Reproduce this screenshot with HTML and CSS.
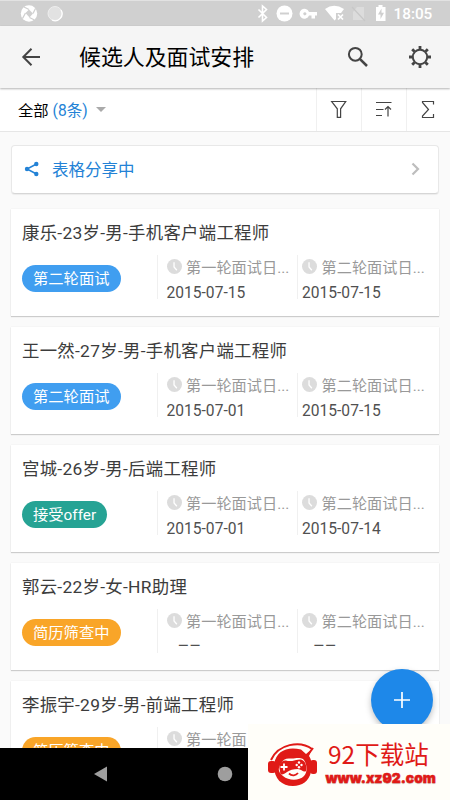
FILE: index.html
```
<!DOCTYPE html>
<html lang="zh-CN">
<head>
<meta charset="utf-8">
<title>候选人及面试安排</title>
<link rel="stylesheet" href="styles.css">
</head>
<body>
<svg width="0" height="0" class="defs">
  <symbol id="clock" viewBox="0 0 16 16"><circle cx="8" cy="8" r="8" fill="#dcdcdc"/><path d="M7.500 3.500V8.500L10.500 12" fill="none" stroke="#fff" stroke-width="1.400"/></symbol>
</svg>
<div class="phone">
  <header class="status">
    <svg width="450" height="26" viewBox="0 0 450 26">
      <circle cx="29" cy="13.500" r="8.200" fill="#fff"/>
      <path d="M25.500 13L29 9.500L33 13.500L29.500 17.500Z" fill="#d0d0d0"/>
      <g fill="none" stroke="#d0d0d0" stroke-width="1.300"><path d="M29 9.500L24 7M33 13.500L35.500 8.500M29.500 17.500L34.500 20M25.500 13L22.500 18.500"/></g>
      <circle cx="55" cy="13.500" r="7" fill="#e2e2e2" stroke="#eee"/>
      <path d="M61 10a7 7 0 0 1-9 10" stroke="#fff" stroke-width="1.300" fill="none"/>
      <path d="M258.500 9.500l8 8-4 3.500V6l4 3.500-8 8" stroke="#fff" fill="none" stroke-width="1.600"/>
      <circle cx="284.500" cy="13.500" r="8" fill="#fff"/><path d="M280 13.500h9" stroke="#d0d0d0" stroke-width="2"/>
      <path d="M309 12H317V15.500H315V18.500H311.500V15.500H309A4.900 4.900 0 1 1 309 12ZM304.800 12.200a1.600 1.600 0 1 0 .1 0Z" fill="#fff" fill-rule="evenodd"/>
      <path d="M325 9Q334 2.500 344 9L341 13H336V19L334.500 20.500Z" fill="#fff"/><path d="M338 14.500l5 5M343 14.500l-5 5" stroke="#fff" stroke-width="1.700"/>
      <path d="M357 7h7v13h-11v-8Z" fill="#dcdcdc"/><path d="M352 7l13 14" stroke="#c7c7c7" stroke-width="1.200"/>
      <path d="M376 7h2.500V5h4v2h3v14h-9.500Z" fill="#fff"/><path d="M381.500 8.500l-3.500 6h2.500v4.500l3.500-6.200h-2.500Z" fill="#cfcfcf"/>
    </svg>
    <span class="time">18:05</span>
  </header>
  <div class="appbar">
    <svg class="back" width="20" height="20" viewBox="0 0 20 20"><path d="M19 10H2.500M10.500 1.800L2.300 10l8.200 8.200" fill="none" stroke="#444" stroke-width="2"/></svg>
    <h1>候选人及面试安排</h1>
    <svg class="search" width="22" height="22" viewBox="0 0 22 22"><circle cx="8.300" cy="8.300" r="6.400" fill="none" stroke="#444" stroke-width="2"/><path d="M12.800 12.800l7.200 7.200" stroke="#444" stroke-width="2.500"/></svg>
    <svg class="gear" width="24" height="24" viewBox="-12 -12 24 24"><circle r="7.200" fill="none" stroke="#444" stroke-width="2"/><path d="M0-11V-8M0 11V8M-11 0H-8M11 0H8M-7.800-7.800L-5.500-5.500M7.800 7.800L5.500 5.500M-7.800 7.800L-5.500 5.500M7.800-7.800L5.500-5.500" stroke="#444" stroke-width="2.800"/></svg>
  </div>
  <nav class="filter">
    <div class="scope"><span>全部</span><span class="count">(8条)</span><i class="caret"></i></div>
    <div class="tool"><svg width="18" height="19" viewBox="0 0 18 19"><path d="M1.700 1.500H15.700L10.600 8.800V17.300H7.300V8.800Z"/></svg></div>
    <div class="tool"><svg width="18" height="19" viewBox="0 0 18 19"><path d="M1 2.500H16.500M1 9.500H8.500M1 15.500H7M13 16.500V6.500M10 9.500L13 6.500L16 9.500"/></svg></div>
    <div class="tool last"><svg width="16" height="19" viewBox="0 0 16 19"><path d="M13.500 4.500V1.500H2.500V2.500L8.500 9.500L2.500 16V17.500H13.500V14"/></svg></div>
  </nav>
  <main class="list">
    <div class="share">
      <svg width="16" height="16" viewBox="0 0 16 16"><path d="M12.500 3L3 8l9.500 5" fill="none" stroke="#2382d6" stroke-width="1.500"/><g fill="#2382d6"><circle cx="12.300" cy="3" r="2.200"/><circle cx="3" cy="8" r="2.200"/><circle cx="12.300" cy="13" r="2.200"/></g></svg>
      <span>表格分享中</span>
      <svg class="chev" width="9" height="14" viewBox="0 0 9 14"><path d="M1.500 1.500L7 7l-5.500 5.500" fill="none" stroke="#bdbdbd" stroke-width="2.200"/></svg>
    </div>
    <article class="card">
      <h2>康乐-23岁-男-手机客户端工程师</h2>
      <div class="row">
        <div class="state"><span class="tag blue">第二轮面试</span></div>
        <div class="field first"><div class="label"><svg><use href="#clock"/></svg>第一轮面试日...</div><div class="value">2015-07-15</div></div>
        <div class="field"><div class="label"><svg><use href="#clock"/></svg>第二轮面试日...</div><div class="value">2015-07-15</div></div>
      </div>
    </article>
    <article class="card">
      <h2>王一然-27岁-男-手机客户端工程师</h2>
      <div class="row">
        <div class="state"><span class="tag blue">第二轮面试</span></div>
        <div class="field first"><div class="label"><svg><use href="#clock"/></svg>第一轮面试日...</div><div class="value">2015-07-01</div></div>
        <div class="field"><div class="label"><svg><use href="#clock"/></svg>第二轮面试日...</div><div class="value">2015-07-15</div></div>
      </div>
    </article>
    <article class="card">
      <h2>宫城-26岁-男-后端工程师</h2>
      <div class="row">
        <div class="state"><span class="tag green">接受offer</span></div>
        <div class="field first"><div class="label"><svg><use href="#clock"/></svg>第一轮面试日...</div><div class="value">2015-07-01</div></div>
        <div class="field"><div class="label"><svg><use href="#clock"/></svg>第二轮面试日...</div><div class="value">2015-07-14</div></div>
      </div>
    </article>
    <article class="card">
      <h2>郭云-22岁-女-HR助理</h2>
      <div class="row">
        <div class="state"><span class="tag orange">简历筛查中</span></div>
        <div class="field first"><div class="label"><svg><use href="#clock"/></svg>第一轮面试日...</div><div class="value none">––</div></div>
        <div class="field"><div class="label"><svg><use href="#clock"/></svg>第二轮面试日...</div><div class="value none">––</div></div>
      </div>
    </article>
    <article class="card">
      <h2>李振宇-29岁-男-前端工程师</h2>
      <div class="row">
        <div class="state"><span class="tag orange">简历筛查中</span></div>
        <div class="field first"><div class="label"><svg><use href="#clock"/></svg>第一轮面</div></div>
        <div class="field"></div>
      </div>
    </article>
  </main>
  <footer class="sysnav">
    <svg width="250" height="52" viewBox="0 0 250 52" fill="#9e9e9e"><path d="M94 26L107 18.500V33.500Z"/><circle cx="225" cy="26" r="7.300"/></svg>
  </footer>
  <button class="fab"><svg width="16" height="16" viewBox="0 0 16 16"><path d="M8 0V16M0 8H16" stroke="#fff" stroke-width="1.700"/></svg></button>
  <aside class="brand">
    <svg width="50" height="44" viewBox="0 0 50 44">
      <path d="M3 17C10 1 32-3 44 6" fill="none" stroke="#e01a17" stroke-width="2"/>
      <rect x="0" y="18" width="8" height="12" rx="3" fill="#e01a17"/><rect x="42" y="17" width="7" height="14" rx="3" fill="#e01a17"/>
      <path d="M6 23C7 8 19 3 33 6.500L38 11L44 6L41 13C44 17 44 23 43 29C41 38 34 43 25 43C14 43 6 36 6 23Z" fill="#e01a17"/>
      <path d="M39 13L45 5" stroke="#e01a17" stroke-width="2"/>
      <path d="M12 22C14 17 18 15 22 15.500C27 16 30 14 35 16C39 20 40 29 36 33C31 38 21 38 15 33C10 29 10 26 12 22Z" fill="#fffef9"/>
      <path d="M12 28C10 22 13 17 18 17.500C23 19.500 29 16 33 16.500C38 18 39 24 38 28C36 30 33 26 30 26C25 26 22 27 19 29C15 32 12 33 12 28Z" fill="#e01a17"/>
      <path d="M12.500 24h7M16 20.500v7" stroke="#fff" stroke-width="1.800"/>
      <g fill="#fff"><circle cx="31" cy="19.500" r="1.200"/><circle cx="28.700" cy="22" r="1.200"/><circle cx="33.500" cy="22" r="1.200"/><circle cx="31" cy="24.300" r="1.200"/></g>
      <path d="M21 30.500C24 33.500 28 32.500 30 30" fill="none" stroke="#e01a17" stroke-width="1.800"/>
    </svg>
    <div class="brandtext"><div class="bname">92下载站</div><div class="burl">www.xz92.com</div></div>
  </aside>
</div>
</body>
</html>
```
FILE: styles.css
```
* { box-sizing: border-box; }
body { margin: 0; font-family: Roboto, "Noto Sans CJK SC", sans-serif; }
svg { display: block; flex: none; }
.defs { position: absolute; }
.phone { position: relative; width: 450px; height: 800px; display: flex; flex-direction: column; overflow: hidden; background: #fafafa; }
.status { height: 26px; flex: none; display: flex; background: #d0d0d0; border-top: 1px solid #e2e2e2; }
.status svg { margin-top: -1px; }
.time { margin-left: -56.500px; line-height: 26px; font-size: 15.300px; font-weight: 500; color: #fff; }
.appbar { height: 62px; flex: none; display: flex; align-items: center; background: #f5f5f5; box-shadow: 0 1px 2px rgba(0,0,0,.3); padding: 0 18px 0 21px; z-index: 1; }
.appbar h1 { margin: 1px 0 0 38px; width: 268px; font-size: 21.900px; line-height: 30px; font-weight: 400; color: #000; }
.search { margin-right: 39px; }
.filter { height: 44px; flex: none; display: flex; background: #fff; border-bottom: 1px solid #e6e6e6; }
.scope { width: 316px; padding: 0 0 1px 18px; display: flex; align-items: center; font-size: 15.300px; color: #000; }
.count { color: #2382d6; margin-left: 4px; font-size: 15.600px; }
.caret { margin-left: 8px; border: 5.500px solid transparent; border-top-color: #aaa; border-bottom: 0; }
.tool { width: 45px; border-left: 1px solid #f0f0f0; display: flex; align-items: center; justify-content: center; }
.tool.last { width: 44px; padding-right: 2px; }
.tool path { fill: none; stroke: #444; stroke-width: 1.200; }
.list { flex: 1; min-height: 0; overflow: hidden; padding: 13px 11px 0; }
.share { height: 49px; margin-bottom: 15px; padding: 0 18px 1px 13px; display: flex; align-items: center; background: #fff; border: 1px solid #e8e8e8; border-bottom-color: #d6d6d6; border-radius: 4px; box-shadow: 0 1px 1px rgba(0,0,0,.06); font-size: 16.500px; color: #2382d6; }
.share svg { margin-left: -1px; }
.share span { margin-left: 12px; margin-top: -1px; }
.share .chev { margin-left: auto; }
.card { height: 107px; margin-bottom: 11px; padding: 11px 0 0 11px; background: #fff; box-shadow: 0 1px 1px rgba(0,0,0,.17), 0 0 1px rgba(0,0,0,.1); }
.card h2 { margin: 0; font-size: 17.400px; letter-spacing: .28px; line-height: 26px; font-weight: 400; color: #3c3c3c; white-space: nowrap; }
.row { display: grid; grid-template-columns: 135px 140px 1fr; margin-top: 9px; }
.state { padding-top: 10px; }
.tag { display: inline-block; height: 27px; line-height: 29px; padding: 0 11px; border-radius: 14px; font-size: 15.300px; color: #fff; white-space: nowrap; }
.blue { background: #409ef0; }
.green { background: #26a394; }
.orange { background: #f9a528; }
.field { height: 44px; border-left: 1px solid #f0f0f0; padding-left: 4px; }
.field.first { padding-left: 8.500px; }
.label { display: flex; align-items: center; height: 22px; font-size: 15.200px; color: #999; white-space: nowrap; }
.label svg { width: 15px; height: 15px; margin-right: 4.500px; }
.value { font-size: 15.600px; line-height: 26px; margin-top: 3px; color: #505050; }
.value.none { margin-top: -1px; padding-left: 11.500px; font-family: "Noto Sans CJK SC", sans-serif; font-size: 20px; letter-spacing: 1px; }
.sysnav { height: 52px; flex: none; background: #000; }
.fab { position: absolute; left: 371px; top: 669px; width: 62px; height: 62px; border: 0; padding: 0; border-radius: 50%; background: #1e88e9; display: flex; align-items: center; justify-content: center; box-shadow: 0 3px 6px rgba(0,0,0,.25); }
.brand { position: absolute; left: 248px; top: 724px; width: 202px; height: 76px; background: #fffef9; display: flex; padding: 19px 0 0 20px; color: #e01a17; }
.brandtext { margin-left: 9px; }
.bname { font-size: 24.500px; line-height: 26px; margin: -2px 0 0 1px; font-family: "Noto Sans CJK SC", sans-serif; white-space: nowrap; }
.burl { font-family: Inter, sans-serif; font-weight: 900; font-size: 13.800px; line-height: 18px; margin: 2px 0 0 -1.500px; white-space: nowrap; -webkit-text-stroke: .5px #e01a17; text-shadow: 0 1px 1px rgba(0,0,0,.2); }
```
